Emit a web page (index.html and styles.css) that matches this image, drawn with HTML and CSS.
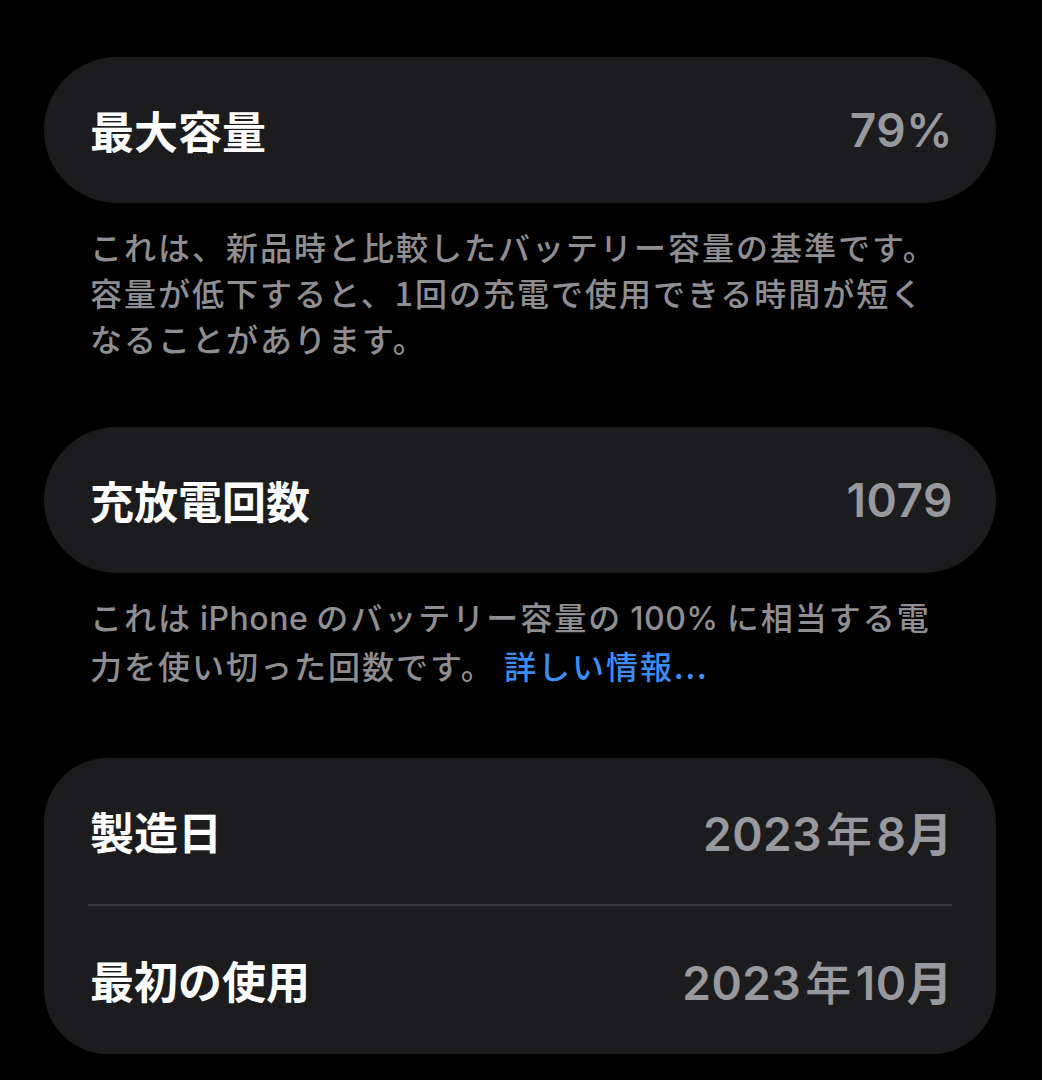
FILE: index.html
```html
<!DOCTYPE html>
<html lang="ja">
<head>
    <meta charset="utf-8">
    <title>バッテリーの状態</title>
    <link rel="stylesheet" href="styles.css">
</head>
<body>
    <div class="page">
        <div class="card">
            <div class="row">
                <span class="label">最大容量</span>
                <span class="value">79%</span>
            </div>
        </div>
        <p class="note">これは、新品時と比較したバッテリー容量の基準です。<br>容量が低下すると、1回の充電で使用できる時間が短く<br>なることがあります。</p>

        <div class="card">
            <div class="row">
                <span class="label">充放電回数</span>
                <span class="value">1079</span>
            </div>
        </div>
        <p class="note">これは<span class="latin">iPhone</span>のバッテリー容量の<span class="latin">100%</span>に相当する電<br>力を使い切った回数です。 <a href="#" class="link">詳しい情報...</a></p>

        <div class="card card-dates">
            <div class="row">
                <span class="label">製造日</span>
                <span class="value">2023<span class="cjk">年</span>8月</span>
            </div>
            <div class="divider"></div>
            <div class="row">
                <span class="label">最初の使用</span>
                <span class="value">2023<span class="cjk">年</span>10月</span>
            </div>
        </div>
    </div>
</body>
</html>
```

FILE: styles.css
```css
html, body {
    background-color: #000;
}
body {
    font-family: Inter, "Noto Sans CJK JP", sans-serif;
    color: #fff;
    margin: 0;
    padding: 0;
}
.page {
    padding: 57px 46px 0 44px;
    display: flex;
    flex-direction: column;
}
.card {
    background-color: #1c1c1e;
    border-radius: 73px;
    display: flex;
    flex-direction: column;
}
.note + .card {
    margin-top: 66px;
}
.note + .card-dates {
    border-radius: 64px;
    margin-top: 70px;
}
.row {
    height: 146px;
    display: flex;
    align-items: center;
    justify-content: space-between;
    padding: 0 43px 0 46px;
}
.row + .divider + .row {
    height: 148px;
}
.label {
    font-family: "Noto Sans CJK JP", sans-serif;
    font-size: 44px;
    font-weight: 700;
    color: #fff;
}
.value {
    font-size: 46px;
    font-weight: 600;
    color: #98989f;
    letter-spacing: 0.5px;
}
.value .cjk {
    font-family: "Noto Sans CJK JP", sans-serif;
    font-weight: 500;
    margin: 0 4px;
}
.divider {
    height: 2px;
    background-color: #38383a;
    margin: 0 44px;
}
.note {
    margin: 20px 0 0 46px;
    font-family: "Noto Sans CJK JP", sans-serif;
    font-size: 32px;
    font-weight: 500;
    line-height: 46px;
    letter-spacing: 2px;
    color: #8e8e93;
    white-space: nowrap;
}
.latin {
    font-family: Inter, sans-serif;
    margin: 0 8px;
    letter-spacing: 0.5px;
}
.link {
    color: #3a8ef5;
    text-decoration: none;
}
```
